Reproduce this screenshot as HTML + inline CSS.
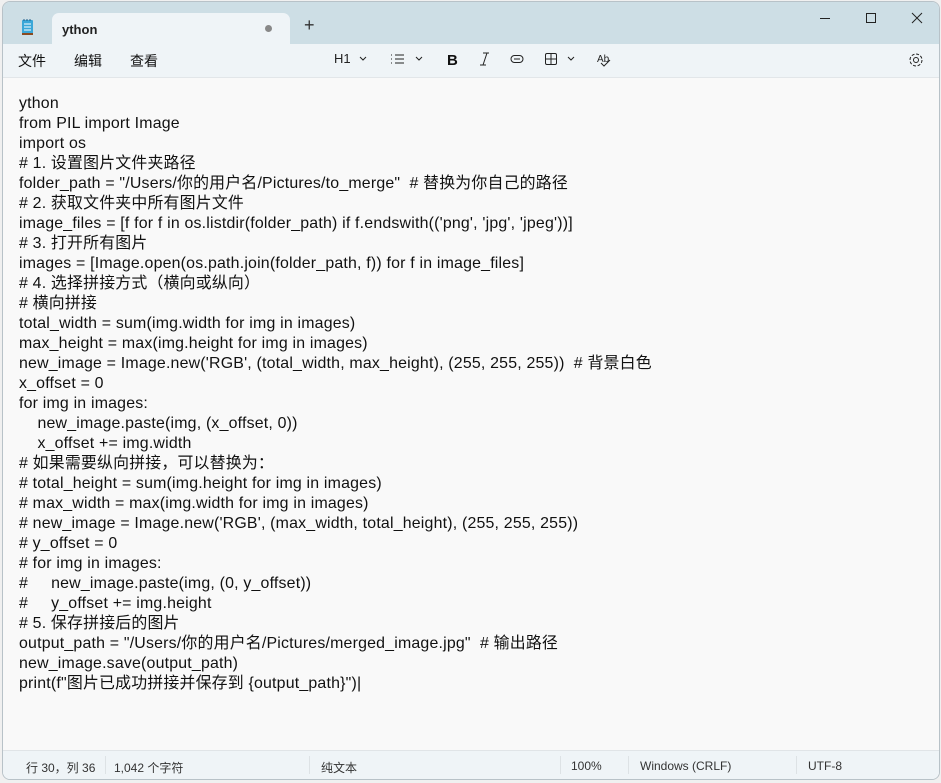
<!DOCTYPE html>
<html><head><meta charset="utf-8"><style>
body{margin:0;width:941px;height:783px;background:#f0f0f0;font-family:"Liberation Sans","Noto Sans CJK SC",sans-serif;overflow:hidden;position:relative}
.win{position:absolute;left:2px;top:1px;width:936px;height:777px;border:1px solid #b8c2c8;border-radius:8px;overflow:hidden;background:#f9f9f9}
.title{position:absolute;left:0;top:0;right:0;height:42px;background:#cddee5}
.tab{position:absolute;left:49px;top:11px;width:238px;height:32px;background:#eff4f7;border-radius:7px 7px 0 0}
.tb{position:absolute;left:0;top:42px;right:0;height:33px;background:#eff4f7;border-bottom:1px solid #e2e6e9}
.ed{position:absolute;left:16px;top:92px;font-size:15.9px;letter-spacing:0.2px;line-height:20px;color:#111;white-space:pre}
.st{position:absolute;left:0;bottom:0;right:0;height:28px;background:#eff4f7;border-top:1px solid #e0e4e7;font-size:12px;color:#333}
.st span{position:absolute;top:8px}
.sep{position:absolute;top:5px;width:1px;height:18px;background:#dde2e5}
.m{position:absolute;font-size:14px;color:#111}
</style></head><body><div class="win">
<div class="title">
<svg style="position:absolute;left:18px;top:16px" width="14" height="18"><rect x="1" y="2" width="11" height="14" rx="1" fill="#3aa7d8"/><rect x="1" y="15" width="11" height="2" fill="#8a4a20"/><path d="M3 6h7M3 9h7M3 12h7" stroke="#fff" stroke-width="1"/><path d="M3 1v2M6 1v2M9 1v2" stroke="#1f5f8a"/></svg>
<div class="tab"><span style="position:absolute;left:10px;top:9px;font-size:13px;font-weight:bold;color:#222">ython</span><span style="position:absolute;left:213px;top:12px;width:7px;height:7px;border-radius:50%;background:#888"></span></div>
<span style="position:absolute;left:301px;top:13px;font-size:18px;color:#333">+</span>
<svg style="position:absolute;left:810px;top:8px" width="120" height="16" stroke="#222" fill="none" stroke-width="1"><path d="M7 8.5h10"/><rect x="53.5" y="3.5" width="9" height="9"/><path d="M99 3l10 10M109 3l-10 10"/></svg>
</div>
<div class="tb">
<span class="m" style="left:15px;top:7px">文件</span><span class="m" style="left:71px;top:7px">编辑</span><span class="m" style="left:127px;top:7px">查看</span>
<svg style="position:absolute;left:328px;top:6px" width="600" height="18" fill="none" stroke="#222" stroke-width="1">
<text x="3" y="13" font-size="13" fill="#222" stroke="none" font-family="Liberation Sans">H1</text>
<path d="M29 7l3 3 3-3M85 7l3 3 3-3M237 7l3 3 3-3"/>
<path d="M60 5h1M60 9h1M60 13h1M64 5h9M64 9h9M64 13h9"/>
<text x="116" y="15" font-size="15" font-weight="bold" fill="#111" stroke="none" font-family="Liberation Sans">B</text>
<path d="M152 3h6M149 15h6M156 3l-4 12"/>
<rect x="180" y="5.5" width="12" height="7" rx="3.5"/><path d="M183 9h6"/>
<rect x="214.5" y="3.5" width="11" height="11" rx="1.5"/><path d="M220 3.5v11M214.5 9h11"/>
<text x="266" y="12" font-size="10" fill="#222" stroke="none" font-family="Liberation Sans">Ab</text><path d="M270 13l3 3 6-6"/>
<circle cx="585" cy="10" r="2.5"/><circle cx="585" cy="10" r="6" stroke-dasharray="3 1.7"/>
</svg>
</div>
<div class="ed">ython
from PIL import Image
import os
# 1. 设置图片文件夹路径
folder_path = "/Users/你的用户名/Pictures/to_merge"  # 替换为你自己的路径
# 2. 获取文件夹中所有图片文件
image_files = [f for f in os.listdir(folder_path) if f.endswith(('png', 'jpg', 'jpeg'))]
# 3. 打开所有图片
images = [Image.open(os.path.join(folder_path, f)) for f in image_files]
# 4. 选择拼接方式（横向或纵向）
# 横向拼接
total_width = sum(img.width for img in images)
max_height = max(img.height for img in images)
new_image = Image.new('RGB', (total_width, max_height), (255, 255, 255))  # 背景白色
x_offset = 0
for img in images:
    new_image.paste(img, (x_offset, 0))
    x_offset += img.width
# 如果需要纵向拼接，可以替换为：
# total_height = sum(img.height for img in images)
# max_width = max(img.width for img in images)
# new_image = Image.new('RGB', (max_width, total_height), (255, 255, 255))
# y_offset = 0
# for img in images:
#     new_image.paste(img, (0, y_offset))
#     y_offset += img.height
# 5. 保存拼接后的图片
output_path = "/Users/你的用户名/Pictures/merged_image.jpg"  # 输出路径
new_image.save(output_path)
print(f"图片已成功拼接并保存到 {output_path}")|</div>
<div class="st">
<span style="left:23px">行 30，列 36</span><div class="sep" style="left:102px"></div><span style="left:111px">1,042 个字符</span>
<div class="sep" style="left:306px"></div><span style="left:318px">纯文本</span>
<div class="sep" style="left:557px"></div><span style="left:568px">100%</span>
<div class="sep" style="left:625px"></div><span style="left:637px">Windows (CRLF)</span>
<div class="sep" style="left:793px"></div><span style="left:805px">UTF-8</span>
</div>
</div></body></html>
